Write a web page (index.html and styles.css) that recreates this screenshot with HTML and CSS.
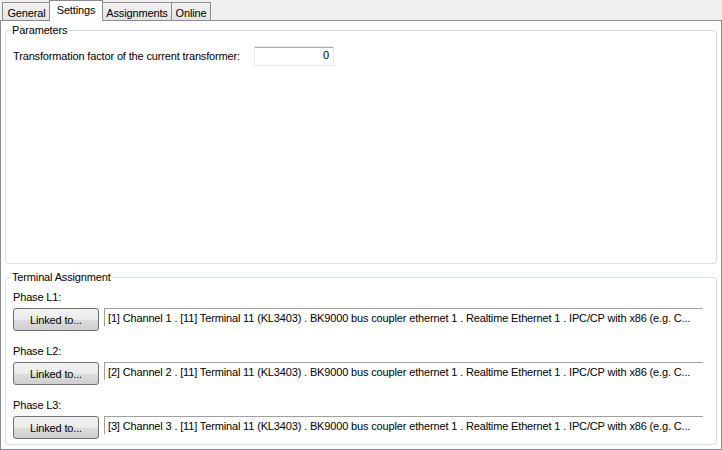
FILE: index.html
```html
<!DOCTYPE html>
<html>
<head>
<meta charset="utf-8">
<link rel="stylesheet" href="styles.css">
</head>
<body>
<div class="window">
  <div class="tabs">
    <div class="tab tab-general">General</div>
    <div class="tab active tab-settings">Settings</div>
    <div class="tab tab-assign">Assignments</div>
    <div class="tab tab-online">Online</div>
  </div>
  <div class="panel">
    <fieldset class="group params">
      <legend>Parameters</legend>
      <div class="param-row">
        <span class="param-label">Transformation factor of the current transformer:</span>
        <div class="num-input">0</div>
      </div>
    </fieldset>
    <fieldset class="group terms">
      <legend>Terminal Assignment</legend>
      <div class="phase">
        <div class="phase-label">Phase L1:</div>
        <div class="phase-row">
          <button class="btn">Linked to...</button>
          <div class="link-field">[1] Channel 1 . [11] Terminal 11 (KL3403) . BK9000 bus coupler ethernet 1 . Realtime Ethernet 1 . IPC/CP with x86 (e.g. C...</div>
        </div>
      </div>
      <div class="phase">
        <div class="phase-label">Phase L2:</div>
        <div class="phase-row">
          <button class="btn">Linked to...</button>
          <div class="link-field">[2] Channel 2 . [11] Terminal 11 (KL3403) . BK9000 bus coupler ethernet 1 . Realtime Ethernet 1 . IPC/CP with x86 (e.g. C...</div>
        </div>
      </div>
      <div class="phase">
        <div class="phase-label">Phase L3:</div>
        <div class="phase-row">
          <button class="btn">Linked to...</button>
          <div class="link-field">[3] Channel 3 . [11] Terminal 11 (KL3403) . BK9000 bus coupler ethernet 1 . Realtime Ethernet 1 . IPC/CP with x86 (e.g. C...</div>
        </div>
      </div>
    </fieldset>
  </div>
</div>
</body>
</html>
```
FILE: styles.css
```css
* { box-sizing: border-box; }
html, body { margin: 0; padding: 0; }
body {
  width: 722px;
  height: 450px;
  background: #f0f0f0;
  font-family: "Liberation Sans", Arial, sans-serif;
  font-size: 11px;
  letter-spacing: -0.15px;
  color: #000;
  overflow: hidden;
}
.window {
  display: flex;
  flex-direction: column;
  height: 450px;
}
.tabs {
  display: flex;
  align-items: flex-end;
  height: 20px;
  padding-left: 2px;
  position: relative;
  z-index: 2;
}
.tab {
  height: 18px;
  padding: 2px 0 0 0;
  text-align: center;
  border: 1px solid #898c95;
  border-bottom: none;
  margin-right: -1px;
  background: linear-gradient(#f2f2f2, #e3e3e3);
  line-height: 16px;
}
.tab-general { width: 49px; }
.tab-settings { width: 54px; }
.tab-assign { width: 70px; }
.tab-online { width: 40px; }
.tab.active {
  height: 21px;
  margin-bottom: -1px;
  margin-left: -1px;
  margin-right: -1px;
  padding-top: 1px;
  background: #fff;
  position: relative;
  z-index: 3;
}
.panel {
  flex: 1;
  background: #fff;
  border: 1px solid #898c95;
  display: flex;
  flex-direction: column;
  padding: 3px 4px 4px 4px;
  gap: 7px;
}
.group {
  margin: 0;
  border: 1px solid #d5dfe5;
  border-radius: 3px;
  padding: 0 6px 0 7px;
}
.group legend {
  padding: 0 1px;
  margin-left: -2px;
  line-height: 13px;
}
.params { height: 240px; }
.terms { flex: 1; }
.param-row {
  display: flex;
  align-items: center;
  margin-top: 9px;
}
.param-label { width: 241px; }
.num-input {
  width: 80px;
  height: 20px;
  border: 1px solid #e3e9ef;
  box-shadow: inset 0 1px 0 #abadb3;
  text-align: right;
  padding: 2px 4px 0 0;
}
.phase-label {
  line-height: 13px;
  margin-top: 0;
}
.phase:first-of-type .phase-label { margin-top: 7px; }
.phase-row {
  display: flex;
  align-items: flex-start;
  margin-top: 4px;
  margin-bottom: 14px;
}
.phase:last-of-type .phase-row { margin-bottom: 0; }
.btn {
  width: 86px;
  height: 23px;
  margin: 0 5px 0 0;
  font-family: inherit;
  font-size: 11px;
  letter-spacing: -0.15px;
  color: #000;
  border: 1px solid #707070;
  border-radius: 3px;
  background: linear-gradient(#f2f2f2 0%, #ebebeb 50%, #dddddd 51%, #cfcfcf 100%);
  padding: 0;
}
.link-field {
  flex: 1;
  margin-right: 7px;
  height: 18px;
  border-top: 1px solid #a0a0a0;
  border-left: 1px solid #a0a0a0;
  padding: 3px 0 0 3px;
  white-space: nowrap;
  overflow: hidden;
  line-height: 13px;
}
```
